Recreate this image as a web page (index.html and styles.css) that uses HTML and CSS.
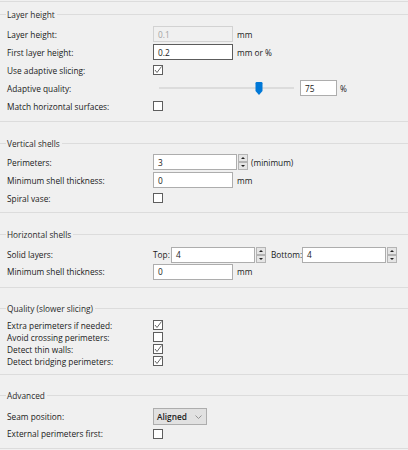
FILE: index.html
```html
<!DOCTYPE html>
<html>
<head>
<meta charset="utf-8">
<link rel="stylesheet" href="styles.css">
</head>
<body>
<div class="page">
  <section class="group g1">
    <div class="ghead"><span class="gtitle">Layer height</span></div>
    <div class="rows">
      <div class="row"><span class="lbl">Layer height:</span><div class="ctl"><span class="inp dis w80">0.1</span><span class="unit">mm</span></div></div>
      <div class="row"><span class="lbl">First layer height:</span><div class="ctl"><span class="inp focus w80">0.2</span><span class="unit">mm or %</span></div></div>
      <div class="row"><span class="lbl">Use adaptive slicing:</span><div class="ctl"><span class="cb on"><svg width="8" height="8" viewBox="0 0 8 8"><polyline points="1,4 3,6.5 7.5,0.5" fill="none" stroke="#555" stroke-width="0.9"/></svg></span></div></div>
      <div class="row"><span class="lbl">Adaptive quality:</span><div class="ctl"><div class="slider"><div class="track"></div><svg class="thumb" width="8" height="13" viewBox="0 0 8 13"><path d="M0.5 1.2 Q0.5 0 1.7 0 H6.3 Q7.5 0 7.5 1.2 V9 L4 13 L0.5 9 Z" fill="#0078d7"/></svg></div><span class="inp w37">75</span><span class="unit u3">%</span></div></div>
      <div class="row"><span class="lbl">Match horizontal surfaces:</span><div class="ctl"><span class="cb"></span></div></div>
    </div>
  </section>

  <section class="group g2">
    <div class="ghead"><span class="gtitle">Vertical shells</span></div>
    <div class="rows">
      <div class="row"><span class="lbl">Perimeters:</span><div class="ctl"><span class="inp w84">3</span><span class="spin"><span class="sb"><i class="up"></i></span><span class="sb"><i class="dn"></i></span></span><span class="unit u3">(minimum)</span></div></div>
      <div class="row"><span class="lbl">Minimum shell thickness:</span><div class="ctl"><span class="inp w80">0</span><span class="unit">mm</span></div></div>
      <div class="row"><span class="lbl">Spiral vase:</span><div class="ctl"><span class="cb"></span></div></div>
    </div>
  </section>

  <section class="group g3">
    <div class="ghead"><span class="gtitle">Horizontal shells</span></div>
    <div class="rows">
      <div class="row"><span class="lbl">Solid layers:</span><div class="ctl"><span class="sub top">Top:</span><span class="inp w84">4</span><span class="spin"><span class="sb"><i class="up"></i></span><span class="sb"><i class="dn"></i></span></span><span class="sub bottom">Bottom:</span><span class="inp w84">4</span><span class="spin"><span class="sb"><i class="up"></i></span><span class="sb"><i class="dn"></i></span></span></div></div>
      <div class="row"><span class="lbl">Minimum shell thickness:</span><div class="ctl"><span class="inp w80">0</span><span class="unit">mm</span></div></div>
    </div>
  </section>

  <section class="group g4">
    <div class="ghead"><span class="gtitle">Quality (slower slicing)</span></div>
    <div class="rows">
      <div class="row"><span class="lbl">Extra perimeters if needed:</span><div class="ctl"><span class="cb on"><svg width="8" height="8" viewBox="0 0 8 8"><polyline points="1,4 3,6.5 7.5,0.5" fill="none" stroke="#555" stroke-width="0.9"/></svg></span></div></div>
      <div class="row"><span class="lbl">Avoid crossing perimeters:</span><div class="ctl"><span class="cb"></span></div></div>
      <div class="row"><span class="lbl">Detect thin walls:</span><div class="ctl"><span class="cb on"><svg width="8" height="8" viewBox="0 0 8 8"><polyline points="1,4 3,6.5 7.5,0.5" fill="none" stroke="#555" stroke-width="0.9"/></svg></span></div></div>
      <div class="row"><span class="lbl">Detect bridging perimeters:</span><div class="ctl"><span class="cb on"><svg width="8" height="8" viewBox="0 0 8 8"><polyline points="1,4 3,6.5 7.5,0.5" fill="none" stroke="#555" stroke-width="0.9"/></svg></span></div></div>
    </div>
  </section>

  <section class="group g5">
    <div class="ghead"><span class="gtitle">Advanced</span></div>
    <div class="rows">
      <div class="row"><span class="lbl">Seam position:</span><div class="ctl"><span class="select"><span class="sel-text">Aligned</span><svg width="7" height="4" viewBox="0 0 7 4"><polyline points="0.5,0.5 3.5,3.5 6.5,0.5" fill="none" stroke="#8a8a8a" stroke-width="0.9"/></svg></span></div></div>
      <div class="row"><span class="lbl">External perimeters first:</span><div class="ctl"><span class="cb"></span></div></div>
    </div>
  </section>
</div>
</body>
</html>
```

FILE: styles.css
```css
* { box-sizing: border-box; }
html, body { margin: 0; padding: 0; }
body {
  background: #f0f0f0;
  font-family: "Open Sans", "Noto Sans", sans-serif;
  font-size: 8.3px;
  color: #1a1a1a;
  width: 408px;
  height: 450px;
  overflow: hidden;
}
.page {
  margin-top: 1px;
  border-top: 1px solid #dcdcdc;
}
.group { border-bottom: 1px solid #dcdcdc; }
.ghead {
  display: flex;
  align-items: center;
  height: 12px;
}
.ghead::before {
  content: "";
  width: 6px;
  height: 1px;
  background: #dcdcdc;
  margin-right: 1px;
}
.ghead::after {
  content: "";
  flex: 1;
  height: 1px;
  background: #dcdcdc;
  margin-left: 2px;
}
.gtitle { color: #2a2a2a; }

.g1 { margin-top: 6px; }
.g1 .rows { padding: 5px 0 6px; }
.g1 .row { height: 18px; }

.g2 { margin-top: 15px; }
.g2 .rows { padding: 4px 0 5px; }
.g2 .row { height: 18px; }

.g3 { margin-top: 15px; }
.g3 .rows { padding: 6px 0 7px; }
.g3 .row { height: 17px; }

.g4 { margin-top: 14px; }
.g4 .rows { padding: 5px 0 7px; }
.g4 .row { height: 12px; }

.g5 { margin-top: 14px; }
.g5 .rows { padding: 7px 0 6px; }
.g5 .row { height: 17px; }

.row {
  display: grid;
  grid-template-columns: 146px auto;
  align-items: center;
  padding-left: 7px;
}
.ctl { display: flex; align-items: center; }

.inp {
  height: 16px;
  border: 1px solid #adadad;
  background: #fff;
  padding-left: 4px;
  display: flex;
  align-items: center;
  color: #1a1a1a;
}
.inp.dis { background: #f0f0f0; border-color: #d2d2d2; color: #a3a3a3; }
.inp.focus { border-color: #5c5c5c; }
.w80 { width: 80px; }
.w84 { width: 84px; }
.w37 { width: 37px; }

.unit { margin-left: 4px; }
.u3 { margin-left: 3px; }

.cb {
  width: 10px;
  height: 10px;
  border: 1px solid #5e5e5e;
  background: #fff;
  display: flex;
  align-items: center;
  justify-content: center;
}

.slider {
  position: relative;
  width: 147px;
  height: 16px;
}
.track {
  position: absolute;
  left: 6px;
  right: 6px;
  top: 7px;
  height: 2px;
  background: #dcdcdc;
}
.thumb {
  position: absolute;
  left: 102px;
  top: 2px;
}

.spin {
  display: flex;
  flex-direction: column;
  justify-content: space-between;
  width: 10px;
  height: 16px;
  margin-left: 1px;
}
.sb {
  height: 8px;
  background: #e5e5e5;
  border: 1px solid #b4b4b4;
  display: flex;
  align-items: center;
  justify-content: center;
}
.sb i {
  width: 0;
  height: 0;
  border-left: 2px solid transparent;
  border-right: 2px solid transparent;
}
.sb i.up { border-bottom: 2px solid #222; }
.sb i.dn { border-top: 2px solid #222; }

.sub.top { width: 18px; }
.sub.bottom { width: 31px; margin-left: 5px; }

.select {
  width: 54px;
  height: 17px;
  background: #e1e1e1;
  border: 1px solid #adadad;
  display: flex;
  align-items: center;
  justify-content: space-between;
  padding: 0 4px 0 3px;
}
.sel-text { font-weight: 600; color: #222; }
```
